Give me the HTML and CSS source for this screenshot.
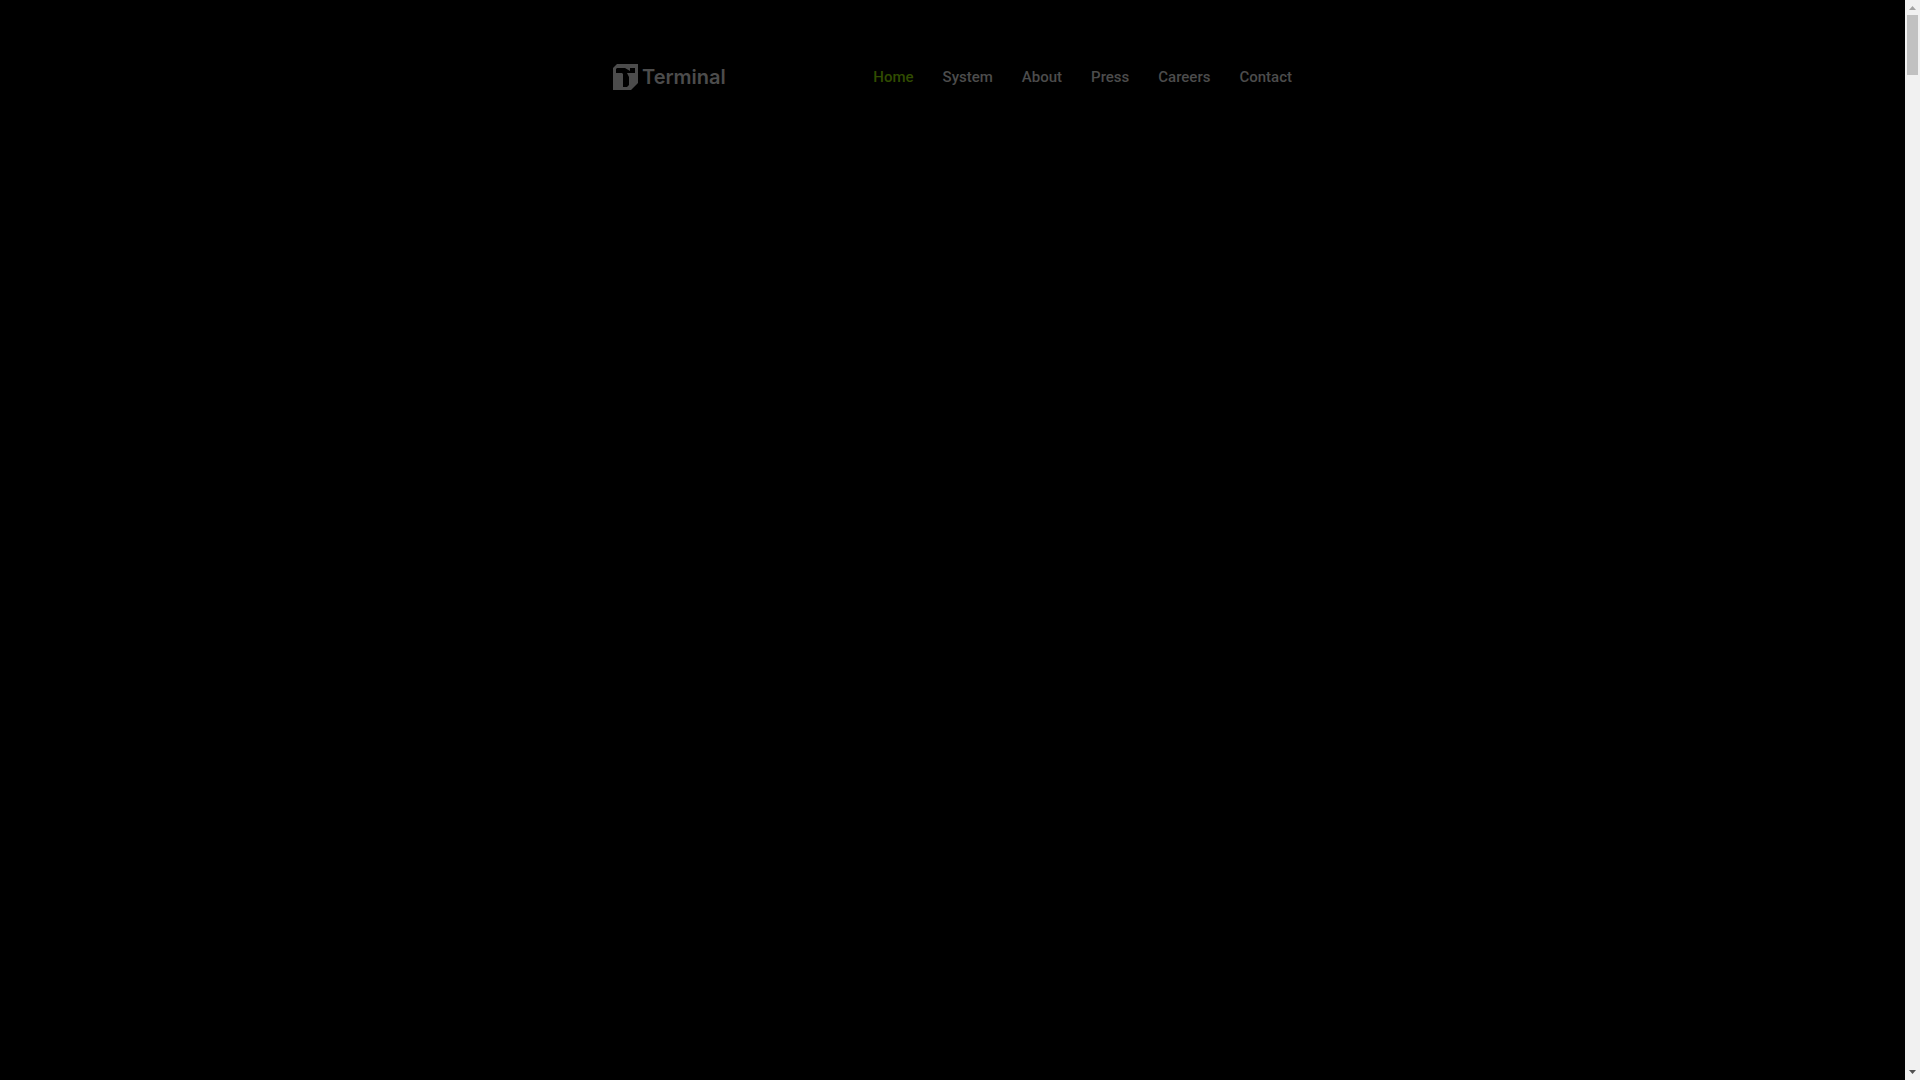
FILE: index.html
```
<!DOCTYPE html>
<html lang="en">
<head>
<meta charset="UTF-8">
<meta name="viewport" content="width=device-width, initial-scale=1.0">
<title>Terminal</title>
<link rel="stylesheet" href="styles.css">
</head>
<body>

<div class="page">
  <header class="header">
    <a href="#" class="logo">
      <svg class="logo-mark" viewBox="0 0 25 26" aria-hidden="true">
        <path fill-rule="evenodd" d="M4 0H25V19L18 26H0V4ZM4 4L3 5V9H9L10 10V23H14L16 21V13L14 9H22V4H17V7L12 4Z"/>
      </svg>
      <span>Terminal</span>
    </a>
    <nav class="nav">
      <a href="#" class="active">Home</a>
      <a href="#system">System</a>
      <a href="#about">About</a>
      <a href="#press">Press</a>
      <a href="#careers">Careers</a>
      <a href="#contact">Contact</a>
    </nav>
  </header>
</div>

<div class="scrollbar" aria-hidden="true">
  <svg class="arrow arrow-up" viewBox="0 0 7 4"><path d="M0 4L3.5 0L7 4Z"/></svg>
  <div class="track"><div class="thumb"></div></div>
  <svg class="arrow arrow-down" viewBox="0 0 7 4"><path d="M0 0L3.5 4L7 0Z"/></svg>
</div>

</body>
</html>
```

FILE: styles.css
```
body, html {
  height: 100%;
  margin: 0;
  background: #000;
  font-family: 'Roboto', sans-serif;
}

body {
  display: flex;
  overflow: hidden;
}

.page {
  flex: 1;
  min-width: 0;
}

.header {
  display: flex;
  align-items: center;
  justify-content: space-between;
  max-width: 679px;
  margin: 0 auto;
  padding: 64px 20px;
}

.logo {
  display: flex;
  align-items: center;
  gap: 4px;
  color: #4c4c4c;
  font-family: 'Inter', sans-serif;
  font-size: 20px;
  font-weight: 600;
  line-height: 26px;
  text-decoration: none;
}

.logo-mark {
  width: 25px;
  height: 26px;
  fill: currentColor;
}

.nav {
  display: flex;
  gap: 29px;
}

.nav a {
  color: #4c4c4c;
  font-size: 15px;
  font-weight: 500;
  line-height: 24px;
  text-decoration: none;
}

.nav a.active {
  color: #304c00;
}

.scrollbar {
  display: flex;
  flex-direction: column;
  align-items: center;
  box-sizing: border-box;
  width: 15px;
  height: 100%;
  padding: 6px 0;
  background: #f1f1f1;
}

.arrow {
  width: 7px;
  height: 4px;
}

.arrow-up {
  fill: #a3a3a3;
}

.arrow-down {
  fill: #505050;
}

.track {
  flex: 1;
  padding-top: 5px;
}

.thumb {
  width: 11px;
  height: 60px;
  background: #c1c1c1;
}
```
